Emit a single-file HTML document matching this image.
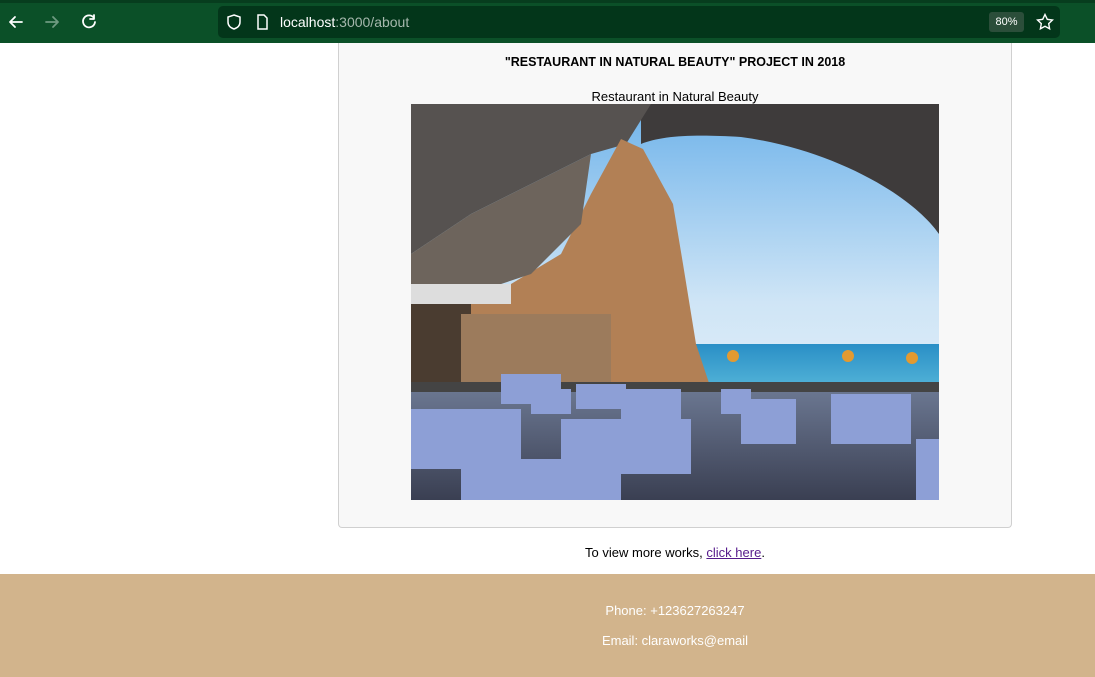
<!DOCTYPE html>
<html><head><meta charset="utf-8"><style>
*{margin:0;padding:0;box-sizing:border-box}
body{width:1095px;height:677px;overflow:hidden;background:#fff;font-family:"Liberation Sans",sans-serif;position:relative}
.bar{position:absolute;left:0;top:0;width:1095px;height:43px;background:#0b5028;z-index:5}
.bar:before{content:"";position:absolute;left:0;top:0;width:100%;height:3px;background:#073d1e}
.url{position:absolute;left:218px;top:6px;width:842px;height:32px;background:#03361a;border-radius:5px}
.url .t{position:absolute;left:62px;top:8px;font-size:14px;color:#fff}
.url .t span{color:#a6b8ad}
.zoom{position:absolute;right:36px;top:6px;width:35px;height:20px;background:#2b4e3a;border-radius:3px;color:#fff;font-size:11px;text-align:center;line-height:20px}
.card{position:absolute;left:338px;top:30px;width:674px;height:498px;background:#f8f8f8;border:1px solid #d0d0d0;border-top:none;border-radius:0 0 4px 4px}
h1{position:absolute;left:0;width:100%;top:25px;text-align:center;font-size:12.5px;font-weight:bold;color:#000}
.cap{position:absolute;left:0;width:100%;top:59px;text-align:center;font-size:13px;color:#000}
.img{position:absolute;left:72px;top:74px;width:528px;height:396px;overflow:hidden;background:#6b5a4a}
.more{position:absolute;top:545px;left:0;width:1095px;text-align:center;font-size:13px;padding-left:255px}
.more a{color:#551a8b}
.foot{position:absolute;left:0;top:574px;width:1095px;height:103px;background:#d2b48c;color:#fff;font-size:13px}
.foot p{position:absolute;left:0;width:100%;text-align:center;padding-left:255px}
</style></head><body>
<div class="bar">
<svg style="position:absolute;left:8px;top:13px" width="100" height="18" fill="none" stroke-width="1.8" stroke-linecap="round" stroke-linejoin="round">
<path d="M14 9H2M7 4L2 9l5 5" stroke="#fff"/>
<path d="M38 9h12M45 4l5 5-5 5" stroke="#6e9a80"/>
<path d="M86 5a6 6 0 1 0 1 4M86 2v4h-4" stroke="#fff"/>
</svg>
<div class="url">
<svg style="position:absolute;left:8px;top:7px" width="50" height="18" fill="none" stroke="#fff" stroke-width="1.5"><path d="M8 2l6 2v5c0 4-3 6-6 7-3-1-6-3-6-7V4z"/><path d="M32 2h6l3 3v11h-9z"/></svg>
<div class="t">localhost<span>:3000/about</span></div>
<div class="zoom">80%</div>
<svg style="position:absolute;right:6px;top:7px" width="18" height="18" fill="none" stroke="#fff" stroke-width="1.4"><path d="M9 1.5l2.3 4.8 5.2.7-3.8 3.6.9 5.2L9 13.3l-4.6 2.5.9-5.2L1.5 7l5.2-.7z"/></svg>
</div>
</div>
<div class="card">
<h1>"RESTAURANT IN NATURAL BEAUTY" PROJECT IN 2018</h1>
<div class="cap">Restaurant in Natural Beauty</div>
<div class="img">
<svg width="528" height="396" viewBox="0 0 528 396">
<defs><linearGradient id="sky" x1="0" y1="0" x2="0" y2="1"><stop offset="0" stop-color="#6fb3ea"/><stop offset="0.5" stop-color="#cfe5f6"/><stop offset="1" stop-color="#f2f7fb"/></linearGradient>
<linearGradient id="sea" x1="0" y1="0" x2="0" y2="1"><stop offset="0" stop-color="#2a8fc6"/><stop offset="1" stop-color="#4fb0d6"/></linearGradient>
<linearGradient id="deck" x1="0" y1="0" x2="0" y2="1"><stop offset="0" stop-color="#6a7690"/><stop offset="1" stop-color="#3a3f52"/></linearGradient></defs>
<rect width="528" height="396" fill="url(#sky)"/>
<rect y="240" width="528" height="40" fill="url(#sea)"/>
<path d="M0 0H528V130C500 90 420 45 330 33 280 30 250 32 230 40V0Z" fill="#3e3b3b"/>
<path d="M0 0H240L215 40 180 50 140 70 60 110 0 150Z" fill="#565250"/>
<path d="M210 35L232 45 262 100 272 160 285 240 300 285H60V200L100 180 150 150 180 90Z" fill="#b28055"/>
<path d="M0 150L60 110 140 70 180 50 170 120 120 170 60 190 0 200Z" fill="#6d645c"/>
<rect y="180" width="100" height="20" fill="#ddd"/>
<rect y="200" width="60" height="100" fill="#4a3c30"/>
<rect x="50" y="210" width="150" height="70" fill="#9c7b5c"/>
<rect y="278" width="528" height="12" fill="#444"/>
<path d="M0 288H528V396H0Z" fill="url(#deck)"/>
<g fill="#8d9fd6"><rect x="0" y="305" width="110" height="60"/><rect x="150" y="315" width="130" height="55"/><rect x="50" y="355" width="160" height="41"/><rect x="330" y="295" width="55" height="45"/><rect x="420" y="290" width="80" height="50"/><rect x="90" y="270" width="60" height="30"/><rect x="210" y="285" width="60" height="30"/><rect x="165" y="280" width="50" height="25"/><rect x="505" y="335" width="23" height="61"/><rect x="120" y="285" width="40" height="25"/><rect x="310" y="285" width="30" height="25"/></g>
<g fill="#e39a30"><circle cx="322" cy="252" r="6"/><circle cx="437" cy="252" r="6"/><circle cx="501" cy="254" r="6"/></g>
</svg>
</div>
</div>
<div class="more">To view more works, <a href="#">click here</a>.</div>
<div class="foot"><p style="top:29px">Phone: +123627263247</p><p style="top:59px">Email: claraworks@email</p></div>
</body></html>
